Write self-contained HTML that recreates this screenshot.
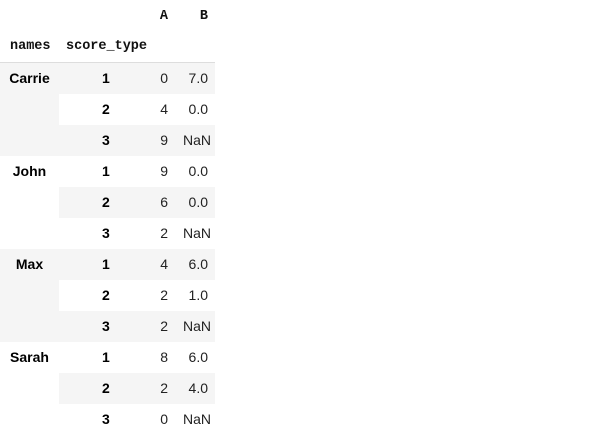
<!DOCTYPE html>
<html><head><style>
body{margin:0;background:#fff;font-family:"Liberation Sans",Arial,sans-serif;font-size:14px;color:#000}
table{border-collapse:collapse;position:absolute;left:0;top:1px;table-layout:fixed;width:215px}
td,th{padding:0;height:31px;line-height:31px;box-sizing:border-box;overflow:visible;white-space:nowrap}
thead th{font-family:"Liberation Mono",monospace;font-weight:bold;font-size:13.5px;color:#111}
thead tr.h1 th{height:30px;line-height:30px}
thead tr.h1 th span{position:relative;top:1px}
thead tr.h2 th{border-bottom:1px solid #ddd}
.c2{text-align:right;padding-right:15px}
.c3{text-align:right;padding-right:7px}
tbody th.n{vertical-align:top;text-align:center;font-weight:bold}
tbody th.s{text-align:left;padding-left:43px;font-weight:bold}
tbody td{color:#222}
.g{background:#f5f5f5}
</style></head><body>
<table>
<colgroup><col style="width:59px"><col style="width:86px"><col style="width:38px"><col style="width:32px"></colgroup>
<thead>
<tr class="h1"><th></th><th></th><th style="text-align:right;padding-right:15px"><span>A</span></th><th style="text-align:right;padding-right:7px"><span>B</span></th></tr>
<tr class="h2"><th style="text-align:left;padding-left:10px">names</th><th style="text-align:left;padding-left:7px">score_type</th><th></th><th></th></tr>
</thead>
<tbody>
<tr class="g"><th class="n" rowspan="3">Carrie</th><th class="s">1</th><td class="c2">0</td><td class="c3">7.0</td></tr>
<tr><th class="s">2</th><td class="c2">4</td><td class="c3">0.0</td></tr>
<tr class="g"><th class="s">3</th><td class="c2">9</td><td class="c3">NaN</td></tr>
<tr><th class="n" rowspan="3">John</th><th class="s">1</th><td class="c2">9</td><td class="c3">0.0</td></tr>
<tr class="g"><th class="s">2</th><td class="c2">6</td><td class="c3">0.0</td></tr>
<tr><th class="s">3</th><td class="c2">2</td><td class="c3">NaN</td></tr>
<tr class="g"><th class="n" rowspan="3">Max</th><th class="s">1</th><td class="c2">4</td><td class="c3">6.0</td></tr>
<tr><th class="s">2</th><td class="c2">2</td><td class="c3">1.0</td></tr>
<tr class="g"><th class="s">3</th><td class="c2">2</td><td class="c3">NaN</td></tr>
<tr><th class="n" rowspan="3">Sarah</th><th class="s">1</th><td class="c2">8</td><td class="c3">6.0</td></tr>
<tr class="g"><th class="s">2</th><td class="c2">2</td><td class="c3">4.0</td></tr>
<tr><th class="s">3</th><td class="c2">0</td><td class="c3">NaN</td></tr>
</tbody>
</table>
</body></html>
